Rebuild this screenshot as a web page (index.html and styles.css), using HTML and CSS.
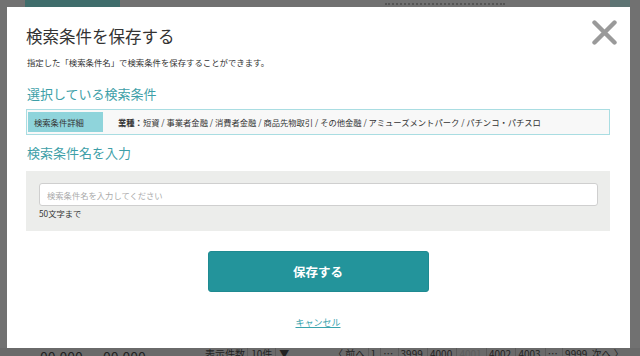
FILE: index.html
```html
<!DOCTYPE html>
<html lang="ja">
<head>
    <meta charset="UTF-8">
    <meta name="viewport" content="width=device-width, initial-scale=1.0">
    <title>検索条件を保存する</title>
    <link rel="stylesheet" href="styles.css">
</head>
<body>

<header class="page-header">
    <div class="page-tab"></div>
    <div class="page-menu"></div>
    <div class="page-end"></div>
</header>

<footer class="page-footer">
    <span class="range">00,000 〜 00,000</span>
    <span class="count">表示件数 <span class="cell">10件</span><span class="cell">▼</span></span>
    <span class="pager">
        <span>〈 前へ</span>
        <span class="cell">1</span>
        <span class="cell">…</span>
        <span class="cell">3999</span>
        <span class="cell">4000</span>
        <span class="cell faded">4001</span>
        <span class="cell">4002</span>
        <span class="cell">4003</span>
        <span class="cell">…</span>
        <span class="cell">9999</span>
        <span>次へ 〉</span>
    </span>
</footer>

<div class="overlay">
    <div class="modal">
        <button class="close" type="button" aria-label="閉じる">
            <svg width="25" height="25" viewBox="0 0 25 25">
                <path d="M2.5 2.5 L22.5 22.5 M22.5 2.5 L2.5 22.5" stroke="#9a9a9a" stroke-width="4.4" stroke-linecap="round"/>
            </svg>
        </button>

        <h1 class="modal-title">検索条件を保存する</h1>
        <p class="lead">指定した「検索条件名」で検索条件を保存することができます。</p>

        <h2 class="section-title">選択している検索条件</h2>
        <div class="conditions">
            <div class="conditions-label">検索条件詳細</div>
            <div class="conditions-body"><strong>業種：</strong>短資 / 事業者金融 / 消費者金融 / 商品先物取引 / その他金融 / アミューズメントパーク / パチンコ・パチスロ</div>
        </div>

        <h2 class="section-title second">検索条件名を入力</h2>
        <div class="name-box">
            <input class="name-input" type="text" placeholder="検索条件名を入力してください">
            <small class="hint">50文字まで</small>
        </div>

        <div class="actions">
            <button class="save" type="button">保存する</button>
            <a class="cancel" href="#">キャンセル</a>
        </div>
    </div>
</div>

</body>
</html>
```

FILE: styles.css
```css
body {
    font-family: "Noto Sans CJK JP", "Noto Sans", sans-serif;
    margin: 0;
    padding: 0;
    height: 356px;
    overflow: hidden;
    background-color: #717171;
    color: #333;
    display: flex;
    flex-direction: column;
    justify-content: space-between;
}

/* page behind the dialog (already dimmed) */
.page-header {
    height: 7px;
    display: flex;
    overflow: hidden;
}

.page-tab {
    width: 95px;
    margin-left: 25px;
    background-color: #3f6d6b;
}

.page-menu {
    width: 120px;
    margin-left: 265px;
    margin-top: 3px;
    border-top: 2px dotted #555;
}

.page-end {
    width: 20px;
    margin-left: auto;
    margin-right: 10px;
    background-color: #5e7473;
}

.page-footer {
    height: 8px;
    display: flex;
    align-items: flex-start;
    font-size: 10px;
    line-height: 12px;
    color: #222;
    white-space: nowrap;
    overflow: hidden;
    background-color: #6a6a6a;
}

.range {
    font-size: 14px;
    line-height: 14px;
    margin-left: 40px;
    margin-top: 2px;
    width: 165px;
}

.count {
    width: 128px;
}

.cell {
    display: inline-block;
    padding: 0 3px;
    border-left: 1px solid #5a5a5a;
}

.faded {
    color: #5c5c5c;
}

.pager .cell {
    padding: 0 2px;
}

/* dialog */
.overlay {
    position: fixed;
    inset: 0;
    padding: 7px 10px 8px 7px;
    display: flex;
}

.modal {
    position: relative;
    flex: 1;
    background: white;
    padding: 17px 20px 0 19px;
    display: flex;
    flex-direction: column;
}

.close {
    position: absolute;
    top: 13px;
    right: 13px;
    padding: 0;
    border: none;
    background: none;
    width: 25px;
    height: 25px;
    cursor: pointer;
}

.close svg {
    display: block;
}

.modal-title {
    margin: 0;
    font-size: 16.5px;
    line-height: 24px;
    font-weight: normal;
    color: #333;
}

.lead {
    margin: 8px 0 0 1px;
    font-size: 8.4px;
    line-height: 12px;
}

.section-title {
    margin: 17px 0 0 1px;
    font-size: 13px;
    line-height: 18px;
    font-weight: normal;
    color: #3e9fa8;
}

.section-title.second {
    margin-top: 9px;
}

.conditions {
    margin-top: 6px;
    height: 26px;
    box-sizing: border-box;
    border: 1px solid #a9dde2;
    background-color: #f8f8f8;
    padding: 2px 1px;
    display: flex;
    align-items: stretch;
    font-size: 8.3px;
}

.conditions-label {
    width: 75px;
    background-color: #8fd4db;
    display: flex;
    align-items: center;
    padding-left: 6px;
    box-sizing: border-box;
}

.conditions-body {
    display: flex;
    align-items: center;
    padding-left: 15px;
}

.conditions-body strong {
    font-weight: bold;
}

.name-box {
    margin-top: 9px;
    height: 60px;
    box-sizing: border-box;
    background-color: #ecedeb;
    padding: 12px 12px 0 13px;
    display: flex;
    flex-direction: column;
}

.name-input {
    height: 23px;
    box-sizing: border-box;
    border: 1px solid #cfcfcf;
    border-radius: 3px;
    padding: 0 7px;
    font-family: inherit;
    font-size: 8.3px;
    background: white;
}

.name-input::placeholder {
    color: #aaa;
}

.hint {
    margin-top: 1px;
    font-size: 8.3px;
    line-height: 12px;
    color: #333;
}

.actions {
    display: flex;
    flex-direction: column;
    align-items: center;
}

.save {
    margin-top: 20px;
    width: 221px;
    height: 41px;
    background-color: #23949b;
    border: 1px solid #1f8a91;
    border-radius: 3px;
    color: white;
    font-family: inherit;
    font-size: 12.5px;
    font-weight: bold;
    cursor: pointer;
}

.cancel {
    margin-top: 24px;
    font-size: 9px;
    line-height: 14px;
    color: #3aa3ad;
}
```
